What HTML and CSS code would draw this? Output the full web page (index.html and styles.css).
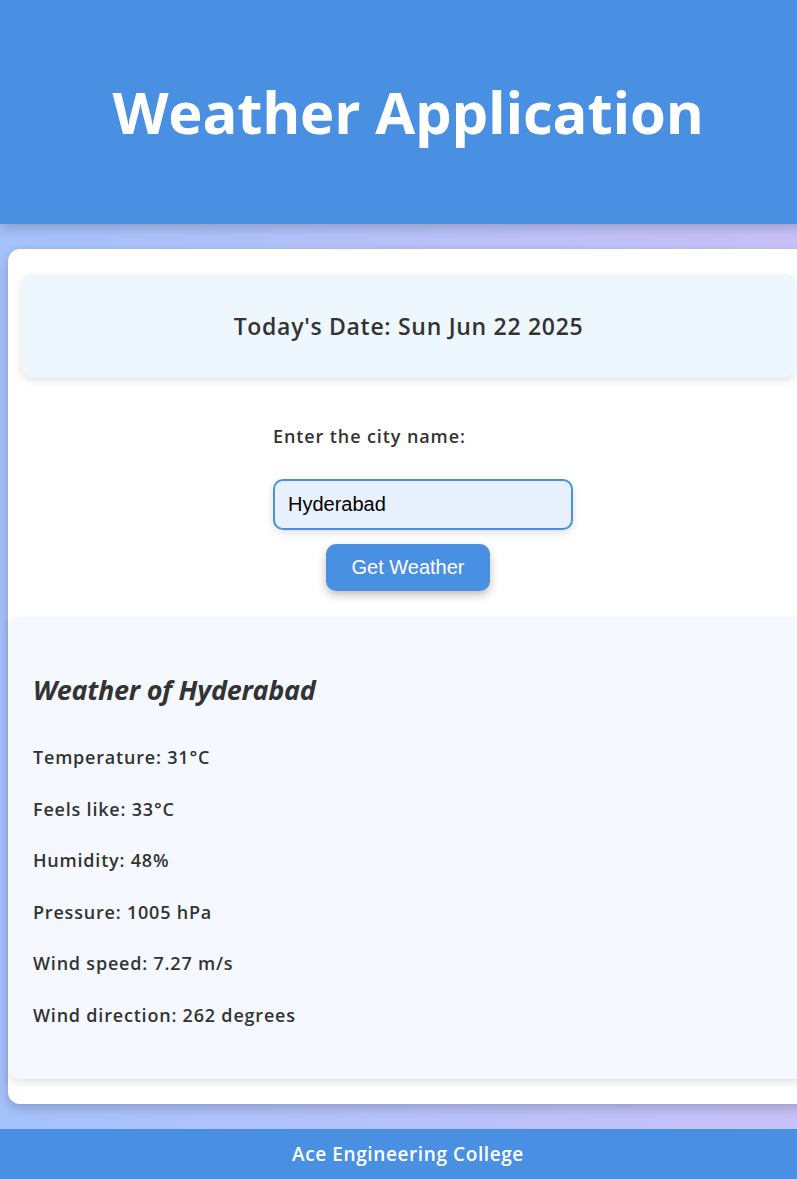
FILE: index.html
```html
<!DOCTYPE html>
<html lang="en">
<head>
<meta charset="utf-8">
<title>Weather Application</title>
<link rel="stylesheet" href="styles.css">
</head>
<body>
<div class="page">
  <header class="site-header">
    <h1 class="site-title">Weather Application</h1>
  </header>
  <main class="card">
    <div class="date-box">
      <h2 class="date-text">Today's Date: Sun Jun 22 2025</h2>
    </div>
    <form class="search" onsubmit="return false;">
      <div class="field">
        <label class="field-label" for="city">Enter the city name:</label>
        <input class="field-input" id="city" type="text" value="Hyderabad">
      </div>
      <button class="btn" type="button">Get Weather</button>
    </form>
    <section class="results">
      <h2 class="results-title">Weather of Hyderabad</h2>
      <p class="results-line">Temperature: 31°C</p>
      <p class="results-line">Feels like: 33°C</p>
      <p class="results-line">Humidity: 48%</p>
      <p class="results-line">Pressure: 1005 hPa</p>
      <p class="results-line">Wind speed: 7.27 m/s</p>
      <p class="results-line">Wind direction: 262 degrees</p>
    </section>
  </main>
  <footer class="site-footer">
    <p class="footer-text">Ace Engineering College</p>
  </footer>
</div>
</body>
</html>
```

FILE: styles.css
```css
html, body {
  margin: 0;
  padding: 0;
  overflow-x: hidden;
}
body {
  font-family: "Open Sans", "Noto Sans", sans-serif;
  color: #333;
  background: linear-gradient(to right, #a5c2fb, #c9c2f9);
}
.page {
  width: 816px;
  display: flex;
  flex-direction: column;
}
.site-header {
  height: 224px;
  background: #4a90e2;
  display: flex;
  align-items: center;
  justify-content: center;
  box-shadow: 0 4px 12px rgba(0, 0, 0, 0.2);
  position: relative;
  z-index: 1;
}
.site-title {
  margin: 0;
  color: #fff;
  font-size: 58px;
  font-weight: 700;
  line-height: 70px;
  letter-spacing: -0.2px;
}
.card {
  margin: 25px 8px 25px 8px;
  background: #fff;
  border-radius: 12px;
  padding: 25px 0 25px 0;
  box-shadow: 0 4px 12px rgba(0, 0, 0, 0.2);
  display: flex;
  flex-direction: column;
}
.date-box {
  margin: 0 12px 0 13px;
  height: 103px;
  background: #eef6fe;
  border-radius: 12px;
  box-shadow: 0 4px 10px rgba(0, 0, 0, 0.1);
  display: flex;
  align-items: center;
  justify-content: center;
}
.date-text {
  margin: 0;
  font-size: 23px;
  font-weight: 600;
  letter-spacing: 0.7px;
  color: #333;
}
.search {
  display: flex;
  flex-direction: column;
  align-items: center;
  padding-top: 47px;
}
.field {
  align-self: flex-start;
  margin-left: 265px;
  width: 300px;
  display: flex;
  flex-direction: column;
}
.field-label {
  font-size: 18px;
  font-weight: 600;
  letter-spacing: 0.9px;
  line-height: 24px;
  margin-bottom: 31px;
}
.field-input {
  box-sizing: border-box;
  width: 300px;
  height: 51px;
  border: 2px solid #4a90e2;
  border-radius: 10px;
  background: #e8f0fe;
  font-family: "Liberation Sans", Arial, sans-serif;
  font-size: 20px;
  padding: 0 13px;
  color: #000;
  box-shadow: 0 3px 8px rgba(0, 0, 0, 0.12);
  outline: none;
}
.btn {
  margin-top: 14px;
  width: 164px;
  height: 47px;
  border: none;
  border-radius: 10px;
  background: #4a90e2;
  color: #fff;
  font-family: "Liberation Sans", Arial, sans-serif;
  font-size: 20px;
  box-shadow: 0 4px 10px rgba(0, 0, 0, 0.25);
}
.results {
  margin-top: 26px;
  background: #f5f9ff;
  border-radius: 10px;
  box-shadow: 0 4px 8px rgba(0, 0, 0, 0.1);
  padding: 53px 25px 32px 25px;
  height: 462px;
  box-sizing: border-box;
}
.results-title {
  margin: 0 0 22px 0;
  font-size: 27px;
  font-style: italic;
  font-weight: 700;
  line-height: 40px;
  letter-spacing: -0.3px;
}
.results-line {
  margin: 0;
  font-size: 18px;
  font-weight: 600;
  letter-spacing: 0.8px;
  line-height: 51.6px;
}
.site-footer {
  height: 50px;
  background: #4a90e2;
  display: flex;
  align-items: center;
  justify-content: center;
}
.footer-text {
  margin: 0;
  color: #fff;
  font-size: 19px;
  font-weight: 600;
  letter-spacing: 0.6px;
}
```
